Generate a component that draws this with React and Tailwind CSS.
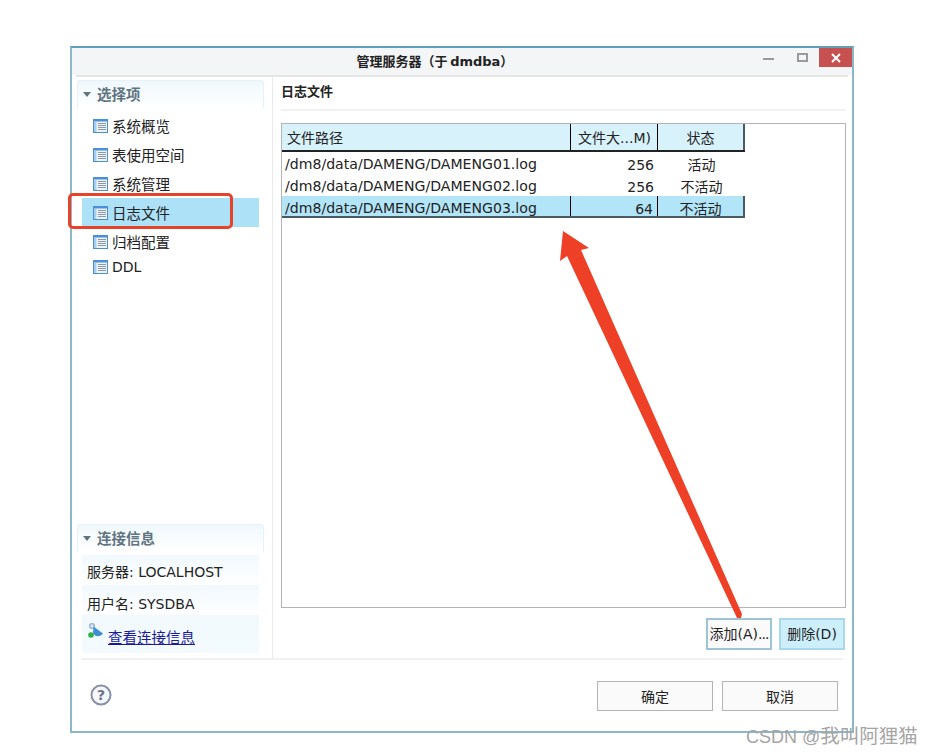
const font = { fontFamily: '"DejaVu Sans","Noto Sans CJK SC",sans-serif' };

function TableIcon() {
  return (
    <svg width="15" height="14" viewBox="0 0 15 14" className="shrink-0">
      <rect x="0.5" y="0.5" width="14" height="13" fill="#eef3f8" stroke="#4a8fd0" />
      <rect x="0" y="0" width="15" height="2.5" fill="#4a90d8" />
      <rect x="1" y="3" width="2.5" height="10" fill="#a9cdec" />
      <path d="M5 4.5h8M5 6.5h8M5 8.5h8M5 10.5h8" stroke="#8a98a8" strokeWidth="1" />
    </svg>
  );
}

function SectionHeader({ children }) {
  return (
    <div className="flex items-center gap-[6px] h-[28px] pl-[5px] rounded-t-[3px] border border-b-0 border-[#e4f3fa] bg-gradient-to-b from-[#f0f8fc] to-white">
      <svg width="8" height="5" viewBox="0 0 8 5"><path d="M0 0h8L4 5z" fill="#5f7480" /></svg>
      <span className="text-[14.5px] font-bold text-[#5f7480] mt-[3px]">{children}</span>
    </div>
  );
}

function NavItem({ label, selected, h = "h-[29px]", textClass = "mt-[3px] text-[14.5px]" }) {
  return (
    <div className={`flex items-center gap-[4px] pl-[11px] text-[#222] ${h} ${selected ? "bg-[#ade1f8]" : ""}`}>
      <TableIcon />
      <span className={`leading-none ${textClass}`}>{label}</span>
    </div>
  );
}

function Row({ path, size, state, selected, h }) {
  return (
    <div className={`flex text-[14px] text-[#222] ${h} ${selected ? "bg-[#b3e5f9] border-b-2 border-[#4a5a64]" : ""}`}>
      <div className={`w-[289px] pl-[3px] pt-[2px] text-[14.1px] leading-[20px] ${selected ? "border-r border-black" : ""}`}>{path}</div>
      <div className={`w-[87px] pr-[4px] pt-[3px] text-right leading-[20px] ${selected ? "border-r border-black" : ""}`}>{size}</div>
      <div className={`w-[87px] pt-[3px] text-center leading-[20px] ${selected ? "border-r-2 border-[#4a5a64]" : ""}`}>{state}</div>
    </div>
  );
}

function InfoRow({ children, className }) {
  return (
    <div className={`flex items-center pl-[5px] h-[30px] text-[14px] text-[#222] bg-gradient-to-b from-[#f1f9fd] to-white ${className}`}>
      {children}
    </div>
  );
}

function Btn({ children, className }) {
  return (
    <button className={`flex items-center justify-center text-[14px] text-[#222] border-2 ${className}`}>{children}</button>
  );
}

export default function App() {
  return (
    <div className="relative w-[933px] h-[754px] bg-white overflow-hidden pt-[46px] pl-[70px]" style={font}>
      <div className="flex flex-col w-[784px] h-[687px] border-2 border-[#8ab8c8] border-t-[#5f9fba] bg-white">
        {/* Title bar */}
        <div className="relative flex items-center justify-center h-[27px] pr-[54px] bg-[#f4f5f7] shrink-0">
          <span className="text-[13px] font-bold text-[#222] pt-[1px] [word-spacing:-2px]">管理服务器（于 dmdba）</span>
          <div className="absolute right-0 top-0 flex items-start">
            <div className="w-[11px] h-[2px] bg-[#9a9a9a] mt-[10px] mr-[23px]" />
            <div className="w-[11px] h-[9px] border-2 border-[#9a9a9a] mt-[5px] mr-[11px]" />
            <div className="flex items-center justify-center w-[33px] h-[19px] bg-[#c75050]">
              <svg width="10" height="10" viewBox="0 0 10 10"><path d="M1 1l8 8M9 1l-8 8" stroke="#fff" strokeWidth="2" /></svg>
            </div>
          </div>
        </div>
        <div className="h-[2px] mx-[4px] bg-[#e4e6e6] shrink-0" />

        {/* Body */}
        <div className="flex flex-1 min-h-0">
          {/* Sidebar */}
          <div className="flex flex-col w-[201px] border-r border-[#e6eaec] pl-[5px] pr-[8px] pt-[3px] shrink-0">
            <SectionHeader>选择项</SectionHeader>
            <div className="flex flex-col mx-[5px] mt-[3px]">
              <NavItem label="系统概览" />
              <NavItem label="表使用空间" />
              <NavItem label="系统管理" />
              <NavItem label="日志文件" selected />
              <NavItem label="归档配置" />
              <NavItem label="DDL" h="h-[22px]" textClass="text-[14px]" />
            </div>
            <div className="mt-auto mb-[5px]">
              <SectionHeader>连接信息</SectionHeader>
              <div className="flex flex-col mx-[5px] mt-[3px]">
                <InfoRow className="pt-[4px]"><span>服务器: LOCALHOST</span></InfoRow>
                <InfoRow className="pt-[8px]"><span>用户名: SYSDBA</span></InfoRow>
                <div className="flex items-center h-[38px] pl-[6px] pt-[10px] bg-gradient-to-b from-[#f1f9fd] to-[#f4fbfe]">
                  <svg width="17" height="16" viewBox="0 0 17 16" className="shrink-0 -mt-[16px]">
                    <circle cx="4" cy="3" r="2.4" fill="#dceaf5" stroke="#8fb0cc" strokeWidth="1.2" />
                    <path d="M5.5 3.5l9.5 7c-3 4-8 3.5-10-0.5z" fill="#3f8fd6" />
                    <circle cx="3" cy="12" r="2.8" fill="#2fae4a" />
                  </svg>
                  <a className="ml-[3px] text-[14.5px] text-[#1a1a9a] underline">查看连接信息</a>
                </div>
              </div>
            </div>
          </div>

          {/* Main */}
          <div className="flex flex-col flex-1 min-w-0 pl-[8px] pr-[6px]">
            <div className="h-[34px] flex items-center border-b-2 border-[#f0f2f2] shrink-0">
              <span className="text-[13px] font-bold text-[#222] -mt-[2px]">日志文件</span>
            </div>
            <div className="flex flex-col h-[485px] mt-[12px] border border-[#b4b4b4] shrink-0">
              <div className="flex h-[26px] w-[463px] bg-[#d8f2fc] border-b-2 border-[#222] text-[14px] text-[#222] box-content">
                <div className="w-[289px] pl-[5px] pt-[3px] flex items-center border-r border-black">文件路径</div>
                <div className="w-[87px] pl-[1px] pt-[3px] flex items-center justify-center border-r border-black whitespace-nowrap">文件大...M)</div>
                <div className="w-[87px] pt-[3px] flex items-center justify-center border-r-2 border-[#4a5a64]">状态</div>
              </div>
              <div className="w-[463px]">
                <Row path="/dm8/data/DAMENG/DAMENG01.log" size="256" state="活动" h="h-[22px]" />
                <Row path="/dm8/data/DAMENG/DAMENG02.log" size="256" state="不活动" h="h-[22px]" />
                <Row path="/dm8/data/DAMENG/DAMENG03.log" size="64" state="不活动" h="h-[22px]" selected />
              </div>
            </div>
            <div className="flex justify-end gap-[7px] mt-[10px] pr-[1px]">
              <Btn className="w-[66px] h-[32px] bg-[#fafafa] border-[#9cc4d6]">添加(A)<span className="tracking-[-1px]">...</span></Btn>
              <Btn className="w-[66px] h-[32px] bg-[#cdeffc] border-[#a9d8ea]">删除(D)</Btn>
            </div>
          </div>
        </div>

        {/* Footer */}
        <div className="flex items-center justify-between h-[73px] mx-[9px] border-t-2 border-[#f0f2f2] pl-[9px] pr-[5px] pt-[1px] shrink-0">
          <svg width="22" height="22" viewBox="0 0 22 22" className="-mt-[2px]">
            <circle cx="11" cy="11" r="9.5" fill="#f6f7fa" stroke="#8890a8" strokeWidth="2" />
            <text x="11" y="16" textAnchor="middle" fontSize="14" fontWeight="700" fill="#6a7288" fontFamily="DejaVu Sans">?</text>
          </svg>
          <div className="flex gap-[9px]">
            <Btn className="w-[116px] h-[30px] pt-[2px] bg-[#fafafa] !border border-[#b4b4b4]">确定</Btn>
            <Btn className="w-[116px] h-[30px] pt-[2px] bg-[#fafafa] !border border-[#b4b4b4]">取消</Btn>
          </div>
        </div>
      </div>

      {/* Annotations */}
      <div className="absolute left-[68px] top-[193px] w-[165px] h-[36px] rounded-[5px] border-[3px] border-[#e8432a]" />
      <svg className="absolute left-0 top-0 pointer-events-none" width="933" height="754">
        <polygon points="563,231 589,248 581,250 742,614 741,618 737,618 567,256 560,261" fill="#ee4026" />
      </svg>
      <div className="absolute left-[746px] top-[724px] text-[18px] leading-[24px] text-[#a5a5a5] whitespace-nowrap" style={{ fontFamily: '"Liberation Sans","Noto Sans CJK SC",sans-serif' }}>
        CSDN @<span className="text-[19.5px]">我叫阿狸猫</span>
      </div>
    </div>
  );
}
